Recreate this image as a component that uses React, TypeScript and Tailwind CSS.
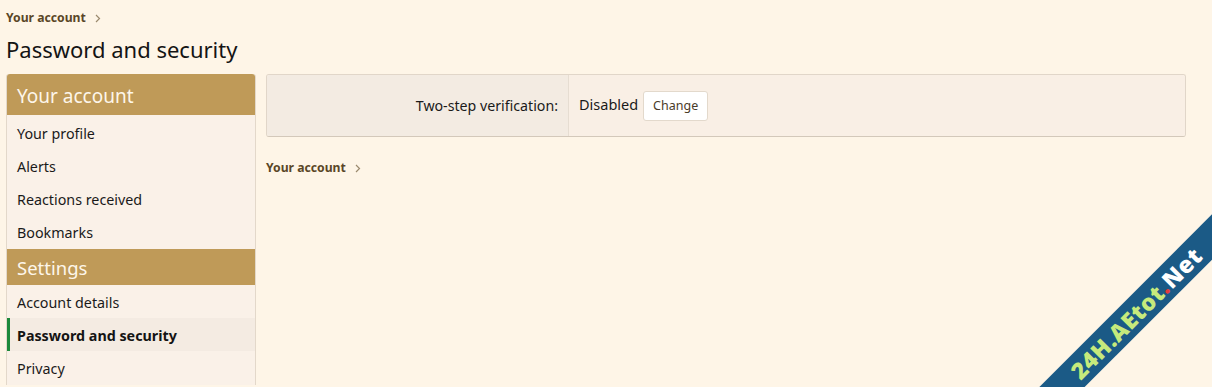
import React from "react";

const font = { fontFamily: '"Noto Sans", "Open Sans", sans-serif' };

function Crumb() {
  return (
    <div className="flex items-center gap-[9px] text-[12.2px] font-bold text-[#5a4626] leading-none">
      <span>Your account</span>
      <svg width="6" height="9" viewBox="0 0 6 9" className="text-[#9b8a6e]">
        <path d="M1 1l3.5 3.5L1 8" fill="none" stroke="currentColor" strokeWidth="1.2" />
      </svg>
    </div>
  );
}

function Item({ label, active }: { label: string; active?: boolean }) {
  return (
    <div
      className={
        "h-[33px] flex items-center text-[14.3px] " +
        (active
          ? "bg-[#f4ebe2] border-l-[3px] border-[#1d8a3b] pl-[7px] font-bold text-[#141414]"
          : "pl-[10px] text-[#1a1a1a]")
      }
    >
      <span className="mt-[2px]">{label}</span>
    </div>
  );
}

export default function App() {
  return (
    <div style={font} className="relative w-[1212px] h-[387px] overflow-hidden bg-[#fef5e7]">
      <div className="pl-[6px] pt-[12px]">
        <Crumb />
        <h1 className="mt-[10px] text-[22px] leading-[30px] text-[#141414]">Password and security</h1>
      </div>
      <div className="flex gap-[10px] pl-[6px] mt-[10px]">
        <div className="w-[250px] shrink-0 bg-[#faf1e8] border-x border-[#e3d8ca] rounded-t-[3px]">
          <div className="h-[41px] bg-[#bf9a58] rounded-t-[3px] flex items-center pl-[10px] pt-[3px] text-[19px] text-[#fdf6ea]">
            Your account
          </div>
          <div className="py-[1px]">
            <Item label="Your profile" />
            <Item label="Alerts" />
            <Item label="Reactions received" />
            <Item label="Bookmarks" />
          </div>
          <div className="h-[36px] bg-[#bf9a58] flex items-center pl-[10px] pt-[2px] text-[18.5px] text-[#fdf6ea]">
            Settings
          </div>
          <div className="pb-[1px]">
            <Item label="Account details" />
            <Item label="Password and security" active />
            <Item label="Privacy" />
          </div>
        </div>
        <div className="w-[920px]">
          <div className="flex h-[63px] rounded-[3px] border border-[#e1d6c9] border-b-[#d3c8ba] overflow-hidden">
            <div className="w-[302px] bg-[#f3ebe2] border-r border-[#e6ddd2] flex justify-end pt-[20px] pr-[10px] text-[14.2px] text-[#1a1a1a]">
              Two-step verification:
            </div>
            <div className="flex-1 bg-[#f9efe5] flex items-start pt-[16px] pl-[10px] gap-[5px]">
              <span className="text-[14.5px] text-[#1a1a1a] mt-[3px]">Disabled</span>
              <button className="h-[30px] w-[65px] rounded-[3px] bg-white border border-[#e3d9cc] text-[12.5px] text-[#4a3b28]">
                Change
              </button>
            </div>
          </div>
          <div className="mt-[25px]">
            <Crumb />
          </div>
        </div>
      </div>
      <div className="absolute left-[986px] top-[297px] w-[300px] h-[32px] bg-[#1b5a86] -rotate-45 flex items-center justify-center text-[23px] font-black tracking-wide leading-none">
        <span>
          <span className="text-[#c6ea7c]">24H.AEtot</span>
          <span className="text-[#e23c3c]">.</span>
          <span className="text-white">Net</span>
        </span>
      </div>
    </div>
  );
}
